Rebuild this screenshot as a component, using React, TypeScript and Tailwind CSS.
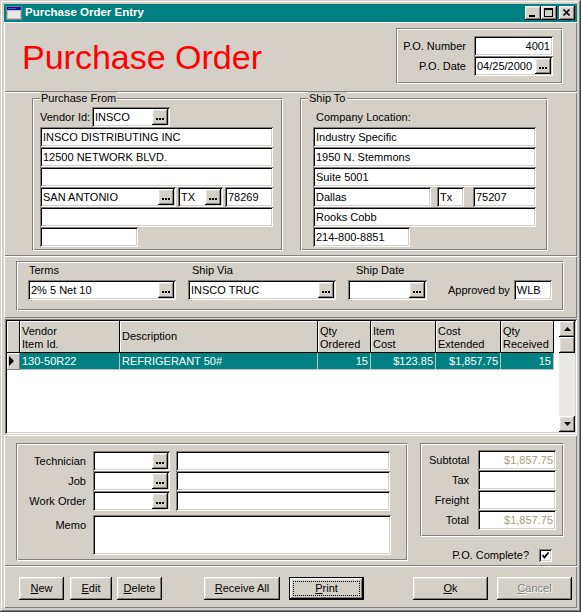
import React from 'react';

// Win98 style bevels
const SUNKEN =
  'shadow-[inset_1px_1px_#808080,inset_-1px_-1px_#ffffff,inset_2px_2px_#000000,inset_-2px_-2px_#d4d0c8]';
const RAISED =
  'shadow-[inset_-1px_-1px_#000000,inset_1px_1px_#ffffff,inset_-2px_-2px_#808080,inset_2px_2px_#dfdfdf]';
const PANEL = 'shadow-[inset_1px_1px_#ffffff,inset_-1px_-1px_#808080]';
const ETCHED =
  'border border-t-[#808080] border-l-[#808080] border-r-white border-b-white shadow-[inset_1px_1px_#ffffff,inset_-1px_-1px_#808080]';

// "..." lookup button
const Ell = () => (
  <div className={`flex h-[16px] w-[16px] shrink-0 items-end justify-center gap-[1px] bg-[#d4d0c8] pb-[5px] ${RAISED}`}>
    <i className="h-[2px] w-[2px] bg-black" />
    <i className="h-[2px] w-[2px] bg-black" />
    <i className="h-[2px] w-[2px] bg-black" />
  </div>
);

// Text box
function Field({ className = '', children, right = false, ell = false, dim = false }: any) {
  return (
    <div className={`flex h-[20px] shrink-0 items-center bg-white p-[2px] ${SUNKEN} ${className}`}>
      <span
        className={`min-w-0 flex-1 overflow-hidden whitespace-nowrap leading-[16px] ${
          right ? 'pr-[1px] text-right' : 'pl-[1px]'
        } ${dim ? 'text-[#a89a78]' : ''}`}
      >
        {children}
      </span>
      {ell && <Ell />}
    </div>
  );
}

// Group box
function Frame({ legend, className = '', children }: any) {
  return (
    <div className={`relative ${ETCHED} ${className}`}>
      {legend && (
        <span className="absolute -top-[7px] left-[7px] bg-[#d4d0c8] px-[1px] leading-[12px]">{legend}</span>
      )}
      {children}
    </div>
  );
}

// Push button
function Btn({ className = '', children, def = false, disabled = false }: any) {
  return (
    <div
      className={`relative flex h-[23px] shrink-0 items-center justify-center bg-[#d4d0c8] ${
        def ? 'border border-black' : ''
      } ${RAISED} ${disabled ? 'text-[#808080] [text-shadow:1px_1px_#ffffff]' : ''} ${className}`}
    >
      {def && <span className="absolute inset-[3px] border border-dotted border-black" />}
      <span className="relative">{children}</span>
    </div>
  );
}

const CapBtn = ({ children, className = '' }: any) => (
  <div className={`flex h-[14px] w-[16px] items-center justify-center bg-[#d4d0c8] ${RAISED} ${className}`}>
    {children}
  </div>
);

const cols = [
  { w: 'w-[100px]', h: ['Vendor', 'Item Id.'], v: '130-50R22', r: false },
  { w: 'w-[198px]', h: ['Description'], v: 'REFRIGERANT 50#', r: false },
  { w: 'w-[53px]', h: ['Qty', 'Ordered'], v: '15', r: true },
  { w: 'w-[65px]', h: ['Item', 'Cost'], v: '$123.85', r: true },
  { w: 'w-[65px]', h: ['Cost', 'Extended'], v: '$1,857.75', r: true },
  { w: 'w-[53px]', h: ['Qty', 'Received'], v: '15', r: true },
];

export default function App() {
  return (
    <div
      className={`flex h-[612px] w-[581px] flex-col bg-[#d4d0c8] p-[4px] font-['Liberation_Sans',Arial,sans-serif] text-[11px] text-black shadow-[inset_-1px_-1px_#404040,inset_1px_1px_#d4d0c8,inset_-2px_-2px_#808080,inset_2px_2px_#ffffff]`}
    >
      {/* title bar */}
      <div className="flex h-[18px] shrink-0 items-center bg-[#008080] px-[2px]">
        <svg width="16" height="14" viewBox="0 0 16 14" shapeRendering="crispEdges">
          <rect x="0.5" y="0.5" width="15" height="13" fill="#c0c0c0" stroke="#808080" />
          <rect x="1" y="1" width="14" height="3" fill="#1010a0" />
          <rect x="2" y="2" width="8" height="1" fill="#4060e0" />
          <rect x="2" y="5" width="12" height="7" fill="#e8e8e8" />
        </svg>
        <span className="ml-[3px] text-[11.5px] font-bold leading-none text-white">Purchase Order Entry</span>
        <div className="ml-auto flex items-center">
          <CapBtn>
            <svg width="16" height="14" viewBox="0 0 16 14" shapeRendering="crispEdges">
              <rect x="4" y="9" width="6" height="2" fill="#000" />
            </svg>
          </CapBtn>
          <CapBtn>
            <svg width="16" height="14" viewBox="0 0 16 14" shapeRendering="crispEdges">
              <rect x="3.5" y="2.5" width="8" height="8" fill="none" stroke="#000" />
              <rect x="3" y="2" width="9" height="2" fill="#000" />
            </svg>
          </CapBtn>
          <CapBtn className="ml-[2px]">
            <svg width="16" height="14" viewBox="0 0 16 14">
              <path d="M4.5 3.5 L10.5 9.5 M10.5 3.5 L4.5 9.5" stroke="#000" strokeWidth="1.7" />
            </svg>
          </CapBtn>
        </div>
      </div>

      {/* heading + P.O. number */}
      <div className={`flex h-[70px] shrink-0 items-start ${PANEL}`}>
        <div className="ml-[18px] mt-[18px] text-[34px] leading-none text-[#ff0000]">Purchase Order</div>
        <Frame className="ml-auto mr-[14px] mt-[6px] h-[56px] w-[167px] pl-[3px] pt-[7px]">
          <div className="grid grid-cols-[66px_79px] gap-x-[8px]">
            <span className="whitespace-nowrap text-right leading-[20px]">P.O. Number</span>
            <Field right>4001</Field>
            <span className="whitespace-nowrap text-right leading-[20px]">P.O. Date</span>
            <Field ell>04/25/2000</Field>
          </div>
        </Frame>
      </div>

      {/* addresses */}
      <div className={`flex h-[164px] shrink-0 items-start pt-[6px] ${PANEL}`}>
        <Frame legend="Purchase From" className="ml-[28px] h-[153px] w-[251px] pl-[7px] pt-[8px]">
          <div className="flex items-center">
            <span className="w-[52px]">Vendor Id:</span>
            <Field className="w-[78px]" ell>
              INSCO
            </Field>
          </div>
          <Field className="w-[233px]">INSCO DISTRIBUTING INC</Field>
          <Field className="w-[233px]">12500 NETWORK BLVD.</Field>
          <Field className="w-[233px]" />
          <div className="flex gap-[2px]">
            <Field className="w-[136px]" ell>
              SAN ANTONIO
            </Field>
            <Field className="w-[45px]" ell>
              TX
            </Field>
            <Field className="w-[48px]">78269</Field>
          </div>
          <Field className="w-[233px]" />
          <Field className="w-[98px]" />
        </Frame>

        <Frame legend="Ship To" className="ml-[17px] h-[153px] w-[248px] pl-[12px] pt-[8px]">
          <div className="h-[20px] pl-[3px] leading-[20px]">Company Location:</div>
          <Field className="w-[223px]">Industry Specific</Field>
          <Field className="w-[223px]">1950 N. Stemmons</Field>
          <Field className="w-[223px]">Suite 5001</Field>
          <div className="flex">
            <Field className="w-[118px]">Dallas</Field>
            <Field className="ml-[6px] w-[27px]">Tx</Field>
            <Field className="ml-[9px] w-[63px]">75207</Field>
          </div>
          <Field className="w-[223px]">Rooks Cobb</Field>
          <Field className="w-[97px]">214-800-8851</Field>
        </Frame>
      </div>

      {/* terms */}
      <div className={`flex h-[62px] shrink-0 items-start pt-[5px] ${PANEL}`}>
        <Frame className="ml-[12px] flex h-[50px] w-[548px] items-end pl-[11px] pt-[1px]">
          <div className="flex flex-col self-start">
            <span className="pl-[1px] leading-[14px]">Terms</span>
            <Field className="mt-[3px] w-[148px]" ell>
              2% 5 Net 10
            </Field>
          </div>
          <div className="ml-[12px] flex flex-col self-start">
            <span className="pl-[4px] leading-[14px]">Ship Via</span>
            <Field className="mt-[3px] w-[148px]" ell>
              INSCO TRUC
            </Field>
          </div>
          <div className="ml-[12px] flex flex-col self-start">
            <span className="pl-[8px] leading-[14px]">Ship Date</span>
            <Field className="mt-[3px] w-[79px]" ell />
          </div>
          <div className="ml-[21px] mt-[17px] flex items-center self-start">
            <span>Approved by</span>
            <Field className="ml-[4px] w-[38px]">WLB</Field>
          </div>
        </Frame>
      </div>

      {/* line item grid */}
      <div className="h-[117px] shrink-0 py-[1px] pl-[1px]">
        <div className={`flex h-full bg-white p-[2px] ${SUNKEN}`}>
          <div className="flex-1">
            <div className="flex">
              <div className="h-[32px] w-[13px] border-r border-b border-black bg-[#d4d0c8] shadow-[inset_1px_1px_#ffffff]" />
              {cols.map((c) => (
                <div
                  key={c.h.join()}
                  className={`flex h-[32px] ${c.w} flex-col border-r border-b border-black bg-[#d4d0c8] pl-[2px] leading-[13px] shadow-[inset_1px_1px_#ffffff] ${
                    c.h.length > 1 ? 'pt-[4px]' : 'justify-center'
                  }`}
                >
                  {c.h.map((t) => (
                    <span key={t}>{t}</span>
                  ))}
                </div>
              ))}
            </div>
            <div className="flex">
              <div className="flex h-[17px] w-[13px] items-center border-r border-b border-[#808080] bg-[#d4d0c8] pl-[2px] shadow-[inset_1px_1px_#ffffff]">
                <svg width="6" height="10" viewBox="0 0 6 10">
                  <polygon points="0,0 5,5 0,10" fill="#000" />
                </svg>
              </div>
              {cols.map((c) => (
                <div
                  key={c.v + c.w}
                  className={`h-[17px] ${c.w} overflow-hidden whitespace-nowrap border-r border-b border-[#c0c0c0] bg-[#008080] leading-[16px] text-white ${
                    c.r ? 'pr-[2px] text-right' : 'pl-[2px]'
                  }`}
                >
                  {c.v}
                </div>
              ))}
            </div>
          </div>
          {/* scrollbar */}
          <div className="flex w-[16px] flex-col">
            <div className={`flex h-[16px] items-center justify-center bg-[#d4d0c8] ${RAISED}`}>
              <svg width="7" height="4" viewBox="0 0 7 4">
                <polygon points="3.5,0 7,4 0,4" fill="#000" />
              </svg>
            </div>
            <div className={`h-[16px] bg-[#d4d0c8] ${RAISED}`} />
            <div className="flex-1 bg-[#ebe9e4]" />
            <div className={`flex h-[16px] items-center justify-center bg-[#d4d0c8] ${RAISED}`}>
              <svg width="7" height="4" viewBox="0 0 7 4">
                <polygon points="0,0 7,0 3.5,4" fill="#000" />
              </svg>
            </div>
          </div>
        </div>
      </div>

      {/* technician / totals */}
      <div className={`flex h-[131px] shrink-0 items-start pt-[8px] ${PANEL}`}>
        <Frame className="ml-[12px] h-[118px] w-[392px] pl-[10px] pt-[7px]">
          {['Technician', 'Job', 'Work Order'].map((l) => (
            <div key={l} className="flex items-center">
              <span className="w-[59px] text-right">{l}</span>
              <Field className="ml-[7px] w-[77px]" ell />
              <Field className="ml-[6px] w-[214px]" />
            </div>
          ))}
          <div className="mt-[4px] flex items-start">
            <span className="w-[59px] text-right leading-[20px]">Memo</span>
            <div className={`ml-[7px] h-[40px] w-[298px] bg-white ${SUNKEN}`} />
          </div>
        </Frame>

        <div className="ml-[12px] flex w-[144px] flex-col">
          <Frame className="h-[94px] w-[144px] pl-[8px] pt-[6px]">
            {[
              ['Subtotal', '$1,857.75'],
              ['Tax', ''],
              ['Freight', ''],
              ['Total', '$1,857.75'],
            ].map(([l, v]) => (
              <div key={l} className="flex items-center">
                <span className="w-[40px] text-right">{l}</span>
                <Field className="ml-[9px] w-[78px]" right dim>
                  {v}
                </Field>
              </div>
            ))}
          </Frame>
          <div className="mt-[10px] flex items-center justify-end pr-[12px]">
            <span>P.O. Complete?</span>
            <div className={`ml-[10px] flex h-[13px] w-[13px] items-center justify-center bg-white ${SUNKEN}`}>
              <svg width="9" height="9" viewBox="0 0 9 9">
                <path d="M1.5 4 L3.5 6.5 L7.5 1.5" fill="none" stroke="#000" strokeWidth="1.8" />
              </svg>
            </div>
          </div>
        </div>
      </div>

      {/* buttons */}
      <div className={`flex h-[42px] shrink-0 items-start pt-[11px] ${PANEL}`}>
        <Btn className="ml-[15px] w-[45px]">
          <u>N</u>ew
        </Btn>
        <Btn className="ml-[6px] w-[42px]">
          <u>E</u>dit
        </Btn>
        <Btn className="ml-[5px] w-[45px]">
          <u>D</u>elete
        </Btn>
        <Btn className="ml-[42px] w-[76px]">
          <u>R</u>eceive All
        </Btn>
        <Btn className="ml-[9px] w-[75px]" def>
          <u>P</u>rint
        </Btn>
        <Btn className="ml-[49px] w-[75px]">
          <u>O</u>k
        </Btn>
        <Btn className="ml-[9px] w-[75px]" disabled>
          <u>C</u>ancel
        </Btn>
      </div>
    </div>
  );
}
